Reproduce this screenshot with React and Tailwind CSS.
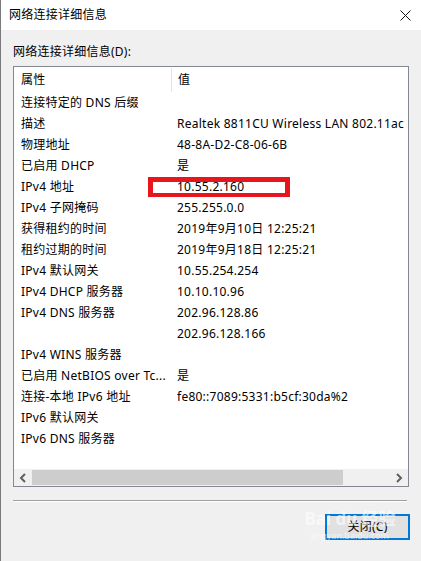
import React from 'react';

const rows = [
    ['连接特定的 DNS 后缀', ''],
    ['描述', 'Realtek 8811CU Wireless LAN 802.11ac'],
    ['物理地址', '48-8A-D2-C8-06-6B'],
    ['已启用 DHCP', '是'],
    ['IPv4 地址', '10.55.2.160'],
    ['IPv4 子网掩码', '255.255.0.0'],
    ['获得租约的时间', '2019年9月10日 12:25:21'],
    ['租约过期的时间', '2019年9月18日 12:25:21'],
    ['IPv4 默认网关', '10.55.254.254'],
    ['IPv4 DHCP 服务器', '10.10.10.96'],
    ['IPv4 DNS 服务器', '202.96.128.86'],
    ['', '202.96.128.166'],
    ['IPv4 WINS 服务器', ''],
    ['已启用 NetBIOS over Tc...', '是'],
    ['连接-本地 IPv6 地址', 'fe80::7089:5331:b5cf:30da%2'],
    ['IPv6 默认网关', ''],
    ['IPv6 DNS 服务器', ''],
];

const App = () => {
    return (
        <div
            className="w-[421px] h-[561px] flex flex-col border-l border-[#7a7a7a] text-[12px] tracking-[0.25px] text-black overflow-hidden relative"
            style={{ fontFamily: '"Noto Sans", "Noto Sans CJK SC", sans-serif' }}
        >
            {/* title bar */}
            <div className="h-[30px] bg-white flex items-center justify-between pl-[8px] pr-[10px]">
                <span className="leading-[16px]">网络连接详细信息</span>
                <svg width="11" height="11" viewBox="0 0 11 11">
                    <path d="M0.5 0.5 L10.5 10.5 M10.5 0.5 L0.5 10.5" stroke="#111" strokeWidth="1" fill="none" />
                </svg>
            </div>

            <div className="flex-1 bg-[#f0f0f0] flex flex-col pl-[12px] pt-[14px]">
                <div className="leading-[16px]">网络连接详细信息(D):</div>

                {/* list view */}
                <div className="mt-[6px] w-[396px] h-[421px] border border-[#828790] bg-white flex flex-col">
                    <div className="h-[402px] flex flex-col overflow-hidden relative">
                        <div className="h-[25px] flex items-center shrink-0">
                            <div className="w-[157px] pl-[7px]">属性</div>
                            <div className="w-px h-[24px] bg-[#e5e5e5] self-start mt-[1px]"></div>
                            <div className="pl-[6px]">值</div>
                        </div>
                        {rows.map(([name, value], i) => (
                            <div key={i} className="h-[21px] flex items-center shrink-0 whitespace-nowrap">
                                <div className="w-[163px] pl-[7px] overflow-hidden">{name}</div>
                                <div className="flex-1 overflow-hidden">{value}</div>
                            </div>
                        ))}
                        {/* red highlight */}
                        <div className="absolute left-[134px] top-[110px] w-[142px] h-[20px] border-[5px] border-b-[4px] border-[#e8141e]"></div>
                    </div>
                    {/* horizontal scrollbar */}
                    <div className="h-[17px] bg-[#f0f0f0] flex items-center">
                        <div className="w-[18px] flex justify-center">
                            <svg width="8" height="10" viewBox="0 0 8 10">
                                <path d="M6 1 L2 5 L6 9" stroke="#606060" strokeWidth="2" fill="none" />
                            </svg>
                        </div>
                        <div className="w-[311px] h-[15px] bg-[#cdcdcd]"></div>
                        <div className="flex-1 flex justify-end pr-[5px]">
                            <svg width="8" height="10" viewBox="0 0 8 10">
                                <path d="M2 1 L6 5 L2 9" stroke="#606060" strokeWidth="2" fill="none" />
                            </svg>
                        </div>
                    </div>
                </div>

                {/* separator */}
                <div className="mt-[13px] w-[394px] h-px bg-[#a0a0a0]"></div>
                <div className="w-[394px] h-px bg-white"></div>

                <div className="mt-[12px] ml-[312px] w-[85px] h-[26px] border-2 border-[#0078d7] bg-[#e1e1e1] flex items-center justify-center">
                    <span>关闭(C)</span>
                </div>
            </div>

            {/* watermark */}
            <div className="absolute left-[304px] top-[508px] w-[90px] text-white/60 pointer-events-none flex flex-col items-center whitespace-nowrap tracking-normal">
                <span className="text-[17px] font-bold leading-[22px]">Bai du 经验</span>
                <span className="text-[9px] leading-[11px]">jingyan.baidu.com</span>
            </div>
        </div>
    );
};

export default App;
